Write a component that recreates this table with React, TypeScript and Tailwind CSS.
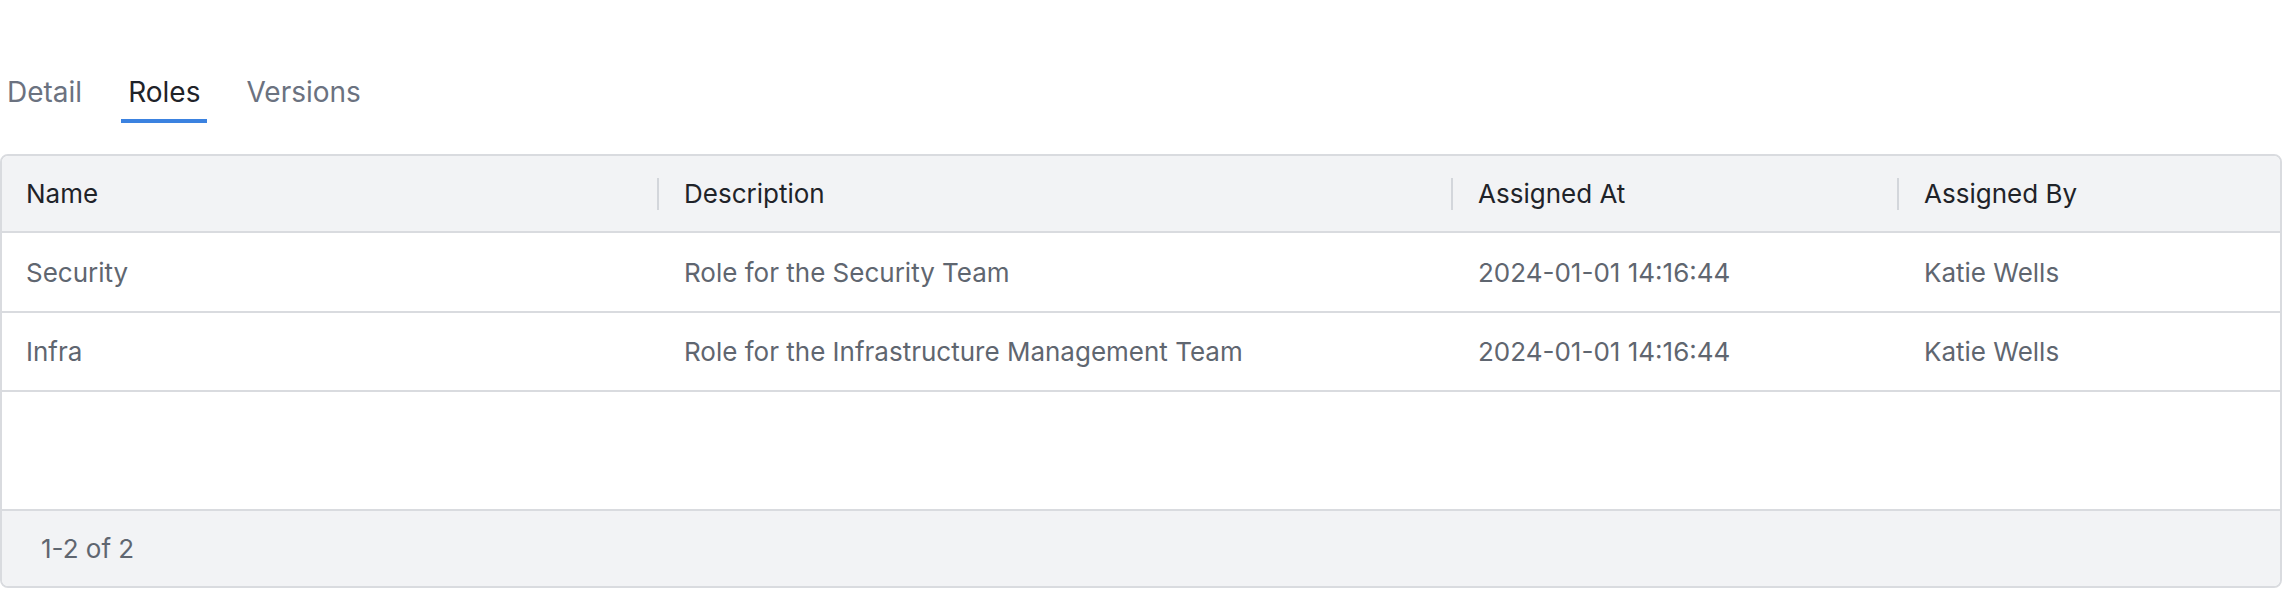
import React, { useState } from 'react';

type Role = {
  name: string;
  description: string;
  assignedAt: string;
  assignedBy: string;
};

const roles: Role[] = [
  {
    name: 'Security',
    description: 'Role for the Security Team',
    assignedAt: '2024-01-01 14:16:44',
    assignedBy: 'Katie Wells',
  },
  {
    name: 'Infra',
    description: 'Role for the Infrastructure Management Team',
    assignedAt: '2024-01-01 14:16:44',
    assignedBy: 'Katie Wells',
  },
];

const tabs = ['Detail', 'Roles', 'Versions'];

export default function App() {
  const [activeTab, setActiveTab] = useState('Roles');

  return (
    <div className="bg-white font-['Inter',sans-serif] pt-[72px]">
      {/* Tabs */}
      <div className="flex items-end gap-[32px]">
        {tabs.map(tab => (
          <button
            key={tab}
            onClick={() => setActiveTab(tab)}
            className={
              tab === activeTab
                ? 'px-[7px] pb-[7px] border-b-4 border-[#3b82e0] text-[28px] leading-[40px] text-[#1f2329]'
                : 'px-[7px] pb-[7px] border-b-4 border-transparent text-[28px] leading-[40px] text-[#6b7280]'
            }
          >
            {tab}
          </button>
        ))}
      </div>

      {/* Table */}
      <div className="mt-[31px] border-2 border-[#d9dbdf] rounded-[8px] overflow-hidden text-[26px]">
        <div className="flex h-[77px] items-center bg-[#f2f3f5] border-b-2 border-[#d9dbdf] text-[#1f2329]">
          <div className="w-[655px] pl-[24px]">Name</div>
          <div className="w-[794px] flex items-center">
            <span className="w-[2px] h-[32px] bg-[#d3d6db]" />
            <span className="pl-[25px]">Description</span>
          </div>
          <div className="w-[446px] flex items-center">
            <span className="w-[2px] h-[32px] bg-[#d3d6db]" />
            <span className="pl-[25px]">Assigned At</span>
          </div>
          <div className="flex-1 flex items-center">
            <span className="w-[2px] h-[32px] bg-[#d3d6db]" />
            <span className="pl-[25px]">Assigned By</span>
          </div>
        </div>

        {roles.map((role, i) => (
          <div
            key={role.name}
            className={
              i === 0
                ? 'flex h-[80px] items-center border-b-2 border-[#d9dbdf] text-[#5f6670]'
                : 'flex h-[79px] items-center border-b-2 border-[#d9dbdf] text-[#5f6670]'
            }
          >
            <div className="w-[655px] pl-[24px]">{role.name}</div>
            <div className="w-[794px] pl-[27px]">{role.description}</div>
            <div className="w-[446px] pl-[27px]">{role.assignedAt}</div>
            <div className="flex-1 pl-[27px]">{role.assignedBy}</div>
          </div>
        ))}

        <div className="h-[119px] border-b-2 border-[#d9dbdf]" />

        <div className="h-[75px] flex items-center bg-[#f2f3f5] pl-[39px] text-[#5f6670]">
          1-2 of 2
        </div>
      </div>
    </div>
  );
}
